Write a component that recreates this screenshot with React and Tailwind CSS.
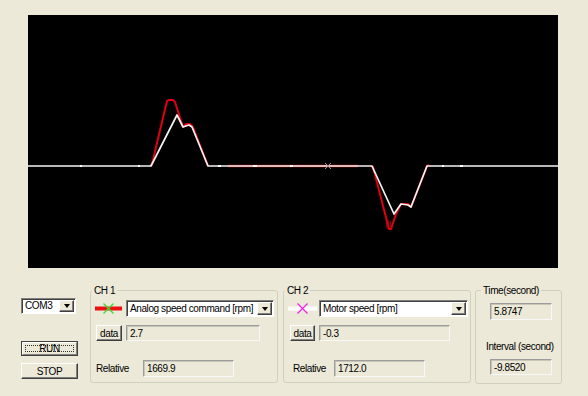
import React from 'react'

const WHITE = '0,151 123,151 149,100 155,112 161,110 164,112 180,151 344,151 366,199 373,189 380,190 383,192 399,151 530,151'
const RED_UP = '122,151 124,149 139,86 141,85 145,85 147,87 155,112 158,109 162,109 165,112 180,151'
const RED_DOWN = '343,151 345,152 361,214 363,214 368,199 373,189 380,189 383,192 399,151 401,150'

function Scope() {
  return (
    <svg width="530" height="253" viewBox="0 0 530 253" className="block">
      <line x1="200" y1="151" x2="330" y2="151" stroke="#b01010" strokeWidth="2.6" />
      <polyline points={RED_UP} fill="none" stroke="#e00010" strokeWidth="2" strokeLinejoin="round" />
      <polyline points={RED_DOWN} fill="none" stroke="#e00010" strokeWidth="2" strokeLinejoin="round" />
      <path d="M358 204 L359 214 M360 205 L361 213 M362 206 L363 212" stroke="#c00010" strokeWidth="0.8" />
      <polyline points={WHITE} fill="none" stroke="#f4f4f4" strokeWidth="1.7" strokeLinejoin="round" />
      <path d="M297 148 L303 154 M303 148 L297 154" stroke="#9a9a9a" strokeWidth="1" />
      <path d="M52 151h2 M110 151h2 M190 151h3 M225 151h4 M262 151h3 M414 151h2 M432 151h3" stroke="#ffffff" strokeWidth="2" />
    </svg>
  )
}

function Arrow() {
  return (
    <div className="w-[15px] h-full flex items-center justify-center bg-[#ece9d8] border border-t-white border-l-white border-r-[#404040] border-b-[#404040] shadow-[inset_-1px_-1px_0_#808080]">
      <div className="w-0 h-0 border-l-[3.5px] border-r-[3.5px] border-t-[4px] border-l-transparent border-r-transparent border-t-black" />
    </div>
  )
}

function Combo({ text, className }) {
  return (
    <div className={`flex items-stretch bg-white border border-t-[#7f7f7f] border-l-[#7f7f7f] border-r-white border-b-white shadow-[inset_1px_1px_0_#404040] p-[1px] ${className}`}>
      <div className="flex-1 pl-[2px] leading-[12px] self-center whitespace-nowrap overflow-hidden">{text}</div>
      <Arrow />
    </div>
  )
}

function Field({ text, className }) {
  return (
    <div className={`flex items-center pl-[3px] bg-[#ece9d8] border border-t-[#9d9d9d] border-l-[#9d9d9d] border-r-[#f8f8f8] border-b-[#f8f8f8] shadow-[inset_1px_1px_0_#c8c6b8] whitespace-nowrap ${className}`}>
      {text}
    </div>
  )
}

function Btn({ children, className, focused }) {
  return (
    <div className={`flex items-center justify-center bg-[#ece9d8] border ${focused ? 'border-[#404040]' : 'border-t-white border-l-white border-r-[#404040] border-b-[#404040] shadow-[inset_-1px_-1px_0_#808080]'} ${className}`}>
      {focused ? (
        <div className="w-full h-full flex items-center justify-center border border-t-white border-l-white border-r-[#808080] border-b-[#808080]">
          <div className="w-[calc(100%-4px)] h-[calc(100%-4px)] flex items-center justify-center border border-dotted border-[#333]">{children}</div>
        </div>
      ) : children}
    </div>
  )
}

function Group({ label, className, children, labelLeft = 'left-[1px]' }) {
  return (
    <div className={`relative border border-[#d0d0bf] rounded-[3px] ${className}`}>
      <span className={`absolute top-[-7px] ${labelLeft} px-[2px] leading-[13px] bg-[#ece9d8]`}>{label}</span>
      {children}
    </div>
  )
}

function LineMark({ line, cross, width }) {
  return (
    <svg width={width} height="17" viewBox={`0 0 ${width} 17`} className="block shrink-0">
      <rect x="0" y="6.5" width={width} height="4" fill={line} />
      <path d={`M${width / 2 - 5} 3.5 L${width / 2 + 5} 13.5 M${width / 2 + 5} 3.5 L${width / 2 - 5} 13.5`} stroke={cross} strokeWidth="1.3" />
    </svg>
  )
}

export default function App() {
  return (
    <div className="w-[588px] h-[396px] overflow-hidden bg-[#ece9d8] text-black text-[10px] tracking-[-0.4px] font-['Liberation_Sans',Arial,sans-serif]">
      <div className="pt-[15px] pl-[28px]">
        <div className="w-[530px] h-[253px] bg-black">
          <Scope />
        </div>
      </div>

      <div className="flex items-start">
        <div className="ml-[21px] w-[57px] mt-[30px] flex flex-col">
          <Combo text="COM3" className="w-[55px] h-[16px]" />
          <Btn focused className="mt-[27px] h-[15px] w-[57px]">RUN</Btn>
          <Btn className="mt-[7px] h-[16px] w-[57px]">STOP</Btn>
        </div>

        <Group label="CH 1" className="ml-[12px] mt-[22px] w-[188px] h-[93px] pt-[9px] pl-[4px]">
          <div className="flex items-center gap-[4px] h-[17px]">
            <LineMark width={27} line="#ee1111" cross="#33dd33" />
            <Combo text="Analog speed command [rpm]" className="w-[148px] h-[17px]" />
          </div>
          <div className="flex items-center gap-[4px] mt-[8px] pl-[1px]">
            <Btn className="w-[26px] h-[16px]">data</Btn>
            <Field text="2.7" className="w-[134px] h-[16px]" />
          </div>
          <div className="flex items-center mt-[19px] pl-[1px]">
            <span className="w-[47px]">Relative</span>
            <Field text="1669.9" className="w-[91px] h-[17px]" />
          </div>
        </Group>

        <Group label="CH 2" className="ml-[5px] mt-[22px] w-[188px] h-[93px] pt-[9px] pl-[4px]">
          <div className="flex items-center gap-[2px] h-[17px]">
            <LineMark width={29} line="#ffffff" cross="#ee22ee" />
            <Combo text="Motor speed [rpm]" className="w-[149px] h-[17px]" />
          </div>
          <div className="flex items-center gap-[4px] mt-[8px] pl-[2px]">
            <Btn className="w-[25px] h-[16px]">data</Btn>
            <Field text="-0.3" className="w-[131px] h-[16px]" />
          </div>
          <div className="flex items-center mt-[19px] pl-[5px]">
            <span className="w-[41px]">Relative</span>
            <Field text="1712.0" className="w-[91px] h-[17px]" />
          </div>
        </Group>

        <Group label="Time(second)" labelLeft="left-[5px]" className="ml-[4px] mt-[22px] w-[87px] h-[94px] pt-[12px] pl-[14px]">
          <Field text="5.8747" className="w-[62px] h-[17px]" />
          <div className="mt-[21px] ml-[-4px] leading-[12px] whitespace-nowrap">Interval (second)</div>
          <Field text="-9.8520" className="mt-[6px] w-[62px] h-[16px]" />
        </Group>
      </div>
    </div>
  )
}
